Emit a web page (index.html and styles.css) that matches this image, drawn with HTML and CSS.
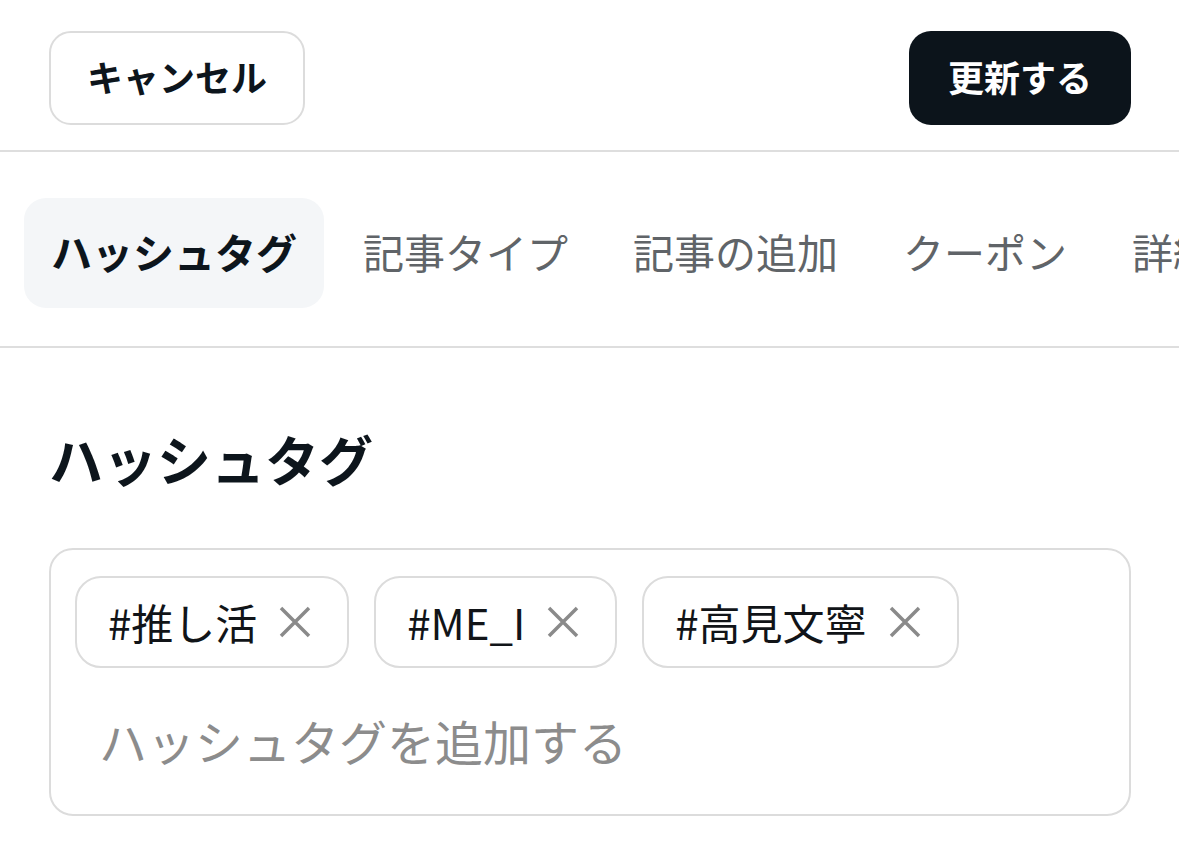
FILE: index.html
```html
<!DOCTYPE html>
<html lang="ja">
<head>
<meta charset="utf-8">
<title>ハッシュタグ</title>
<link rel="stylesheet" href="styles.css">
</head>
<body>
<header class="topbar">
  <button class="btn btn-outline">キャンセル</button>
  <button class="btn btn-dark">更新する</button>
</header>
<nav class="tabs">
  <div class="tab active">ハッシュタグ</div>
  <div class="tab">記事タイプ</div>
  <div class="tab">記事の追加</div>
  <div class="tab">クーポン</div>
  <div class="tab">詳細</div>
</nav>
<main class="content">
  <h2 class="heading">ハッシュタグ</h2>
  <div class="tagbox">
    <div class="chips">
      <span class="chip"><span class="chip-text">#推し活</span><svg class="x" viewBox="0 0 36 36"><path d="M4 4L32 32M32 4L4 32"/></svg></span>
      <span class="chip"><span class="chip-text">#ME_I</span><svg class="x" viewBox="0 0 36 36"><path d="M4 4L32 32M32 4L4 32"/></svg></span>
      <span class="chip"><span class="chip-text">#高見文寧</span><svg class="x" viewBox="0 0 36 36"><path d="M4 4L32 32M32 4L4 32"/></svg></span>
    </div>
    <div class="placeholder">ハッシュタグを追加する</div>
  </div>
</main>
</body>
</html>
```
FILE: styles.css
```css
* { box-sizing: border-box; }
html, body {
  margin: 0;
  padding: 0;
  background: #ffffff;
  width: 1179px;
  height: 844px;
  overflow: hidden;
  font-family: "Noto Sans CJK JP", "Noto Sans", sans-serif;
  color: #0d151c;
}
.topbar {
  display: flex;
  justify-content: space-between;
  align-items: center;
  padding: 31px 48px 25px 49px;
  border-bottom: 2px solid #dedede;
}
.btn {
  height: 94px;
  font-family: "Noto Sans CJK JP", sans-serif;
  font-size: 36px;
  font-weight: 700;
  border-radius: 22px;
  display: flex;
  align-items: center;
  justify-content: center;
  line-height: 1;
  padding: 0 0 4px;
}
.btn-outline {
  width: 256px;
  background: #fff;
  color: #0d151c;
  border: 2.5px solid #dcdcdc;
}
.btn-dark {
  width: 222px;
  background: #0c141b;
  color: #fff;
  border: none;
}
.tabs {
  display: flex;
  gap: 13px;
  padding: 46px 0 38px 24px;
  border-bottom: 2px solid #dedede;
  white-space: nowrap;
  overflow: hidden;
}
.tab {
  flex: none;
  height: 110px;
  padding: 0 26px 4px;
  display: flex;
  align-items: center;
  font-size: 41px;
  color: #606468;
  border-radius: 22px;
  line-height: 1;
}
.tab.active {
  background: #f4f6f8;
  color: #0d151c;
  font-weight: 700;
  padding: 0 27px 4px;
}
.content {
  padding: 0 48px 0 49px;
}
.heading {
  margin: 70px 0 49px;
  font-size: 54px;
  font-weight: 700;
  line-height: 81px;
}
.tagbox {
  border: 2.5px solid #dcdcdc;
  border-radius: 24px;
  padding: 26px 24px 25px;
}
.chips {
  display: flex;
  gap: 25px;
}
.chip {
  display: flex;
  align-items: center;
  height: 92px;
  padding: 0 34px 0 31px;
  border: 2.5px solid #dcdcdc;
  border-radius: 26px;
  gap: 20px;
}
.chip-text {
  font-size: 42px;
  color: #111418;
  line-height: 1;
}
.x {
  width: 36px;
  height: 36px;
  fill: none;
  stroke: #8a8a8a;
  stroke-width: 3.5;
}
.placeholder {
  margin-top: 23px;
  height: 98px;
  display: flex;
  align-items: center;
  padding-left: 24px;
  font-size: 48px;
  color: #8c8c8c;
  line-height: 1;
}
```
